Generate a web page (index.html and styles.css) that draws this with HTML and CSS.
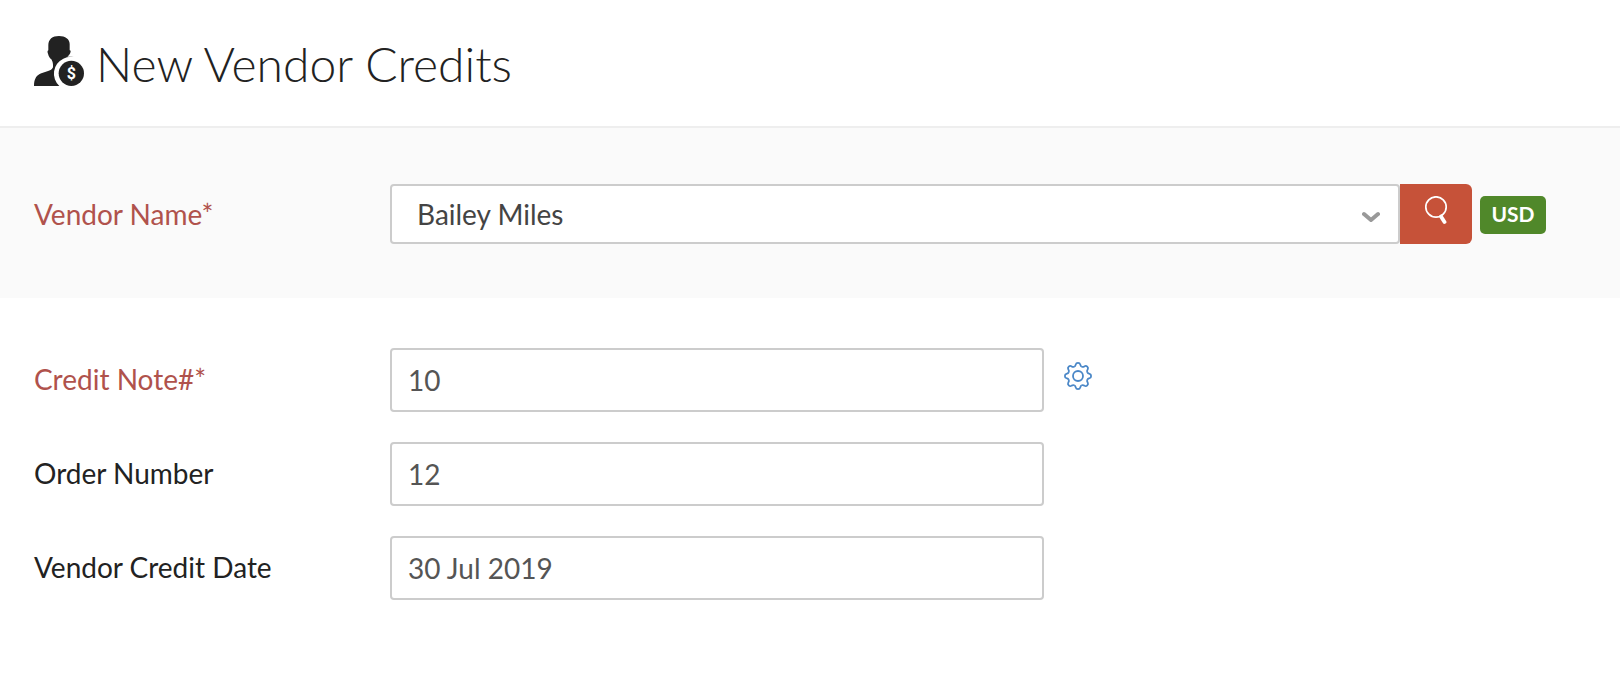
FILE: index.html
```html
<!DOCTYPE html>
<html lang="en">
<head>
<meta charset="utf-8">
<meta name="viewport" content="width=device-width, initial-scale=1">
<title>New Vendor Credits</title>
<link rel="stylesheet" href="styles.css">
</head>
<body>
<header class="page-header">
  <svg class="vendor-icon" viewBox="0 0 150 150" aria-hidden="true">
    <path fill="#222" d="M75 0C55 0 43 10 43 27L43 43C40 44 40 48 42 53C44 62 48 66 52 70C54 74 57 79 57 86L57 94C55 100 49 103 40 106L22 112C8 117 0 128 0 150L150 150L150 62L100 62C106 58 109 53 110 46C110 44 108 43 107 43L107 24C107 9 94 0 75 0Z"/>
    <path fill="#fff" d="M150 50L150 150L76 150A50 50 0 0 1 88 68C95 64 102 62 112 62Z"/>
    <circle cx="112" cy="112" r="38" fill="#222"/>
    <text class="vendor-icon-sign" x="112" y="129" text-anchor="middle">$</text>
  </svg>
  <h1 class="page-title">New Vendor Credits</h1>
</header>
<main>
  <form class="credit-form">
    <div class="form-row vendor-row">
      <label class="form-label required" for="vendor">Vendor Name*</label>
      <div class="vendor-field">
        <div class="select-box">
          <select class="vendor-select" id="vendor"><option>Bailey Miles</option></select>
          <svg class="chevron" viewBox="0 0 18 12" aria-hidden="true"><path d="M2 3L9 9L16 3" fill="none" stroke="#999" stroke-width="4" stroke-linecap="round" stroke-linejoin="round"/></svg>
        </div>
        <button class="search-button" type="button" aria-label="Search vendors">
          <svg class="search-icon" viewBox="0 0 24 28" aria-hidden="true"><circle cx="12" cy="11" r="10.2" fill="none" stroke="#fff" stroke-width="1.7"/><path d="M17 20.5L20.5 26" fill="none" stroke="#fff" stroke-width="3.8" stroke-linecap="round"/></svg>
        </button>
        <span class="currency">USD</span>
      </div>
    </div>
    <div class="details">
      <div class="form-row">
        <label class="form-label" for="note"><span class="required">Credit Note#*</span></label>
        <div class="field">
          <input class="text-input" id="note" type="text" value="10">
          <button class="settings-button" type="button" aria-label="Numbering settings">
            <svg class="gear" viewBox="-14 -14 28 28" fill="none" stroke="#4a87c7" stroke-width="1.8" aria-hidden="true">
              <defs><path id="tooth" d="M-3.83 -9.24C-2.9 -9.6 -2.5 -10.2 -2.2 -11.6C-1.9 -12.8 -1.4 -13.1 0 -13.1C1.4 -13.1 1.9 -12.8 2.2 -11.6C2.5 -10.2 2.9 -9.6 3.83 -9.24"/></defs>
              <use href="#tooth"/><use href="#tooth" transform="rotate(45)"/><use href="#tooth" transform="rotate(90)"/><use href="#tooth" transform="rotate(135)"/><use href="#tooth" transform="rotate(180)"/><use href="#tooth" transform="rotate(225)"/><use href="#tooth" transform="rotate(270)"/><use href="#tooth" transform="rotate(315)"/>
              <circle r="5"/>
            </svg>
          </button>
        </div>
      </div>
      <div class="form-row">
        <label class="form-label" for="order">Order Number</label>
        <div class="field"><input class="text-input" id="order" type="text" value="12"></div>
      </div>
      <div class="form-row">
        <label class="form-label" for="date">Vendor Credit Date</label>
        <div class="field"><input class="text-input" id="date" type="text" value="30 Jul 2019"></div>
      </div>
    </div>
  </form>
</main>
</body>
</html>
```
FILE: styles.css
```css
* { box-sizing: border-box; }

body {
  margin: 0;
  background: #fff;
  color: #222;
  font-family: Lato, "Liberation Sans", sans-serif;
  font-size: 28px;
  line-height: 32px;
}

input, select, button { font: inherit; margin: 0; }

.page-header {
  display: flex;
  align-items: flex-start;
  gap: 12px;
  padding: 36px 34px 34px;
  border-bottom: 2px solid #eee;
}

.vendor-icon { flex: none; width: 50px; height: 50px; }

.vendor-icon-sign {
  fill: #fff;
  font-family: Roboto, sans-serif;
  font-size: 48px;
  font-weight: 700;
}

.page-title {
  margin: 0;
  font-size: 48px;
  font-weight: 300;
  line-height: 56px;
}

.form-row {
  display: grid;
  grid-template-columns: 356px 1fr;
  align-items: center;
  padding: 0 74px 0 34px;
}

.vendor-row {
  padding-top: 56px;
  padding-bottom: 54px;
  background: #fafafa;
}

.required { color: #b0524c; }

.vendor-field { display: flex; align-items: center; }

.select-box { position: relative; flex: 1; }

.vendor-select {
  display: block;
  width: 100%;
  height: 60px;
  padding: 0 60px 0 25px;
  appearance: none;
  border: 2px solid #ccc;
  border-radius: 4px;
  background: #fff;
  color: #444;
}

.chevron {
  position: absolute;
  right: 20px;
  top: 27px;
  width: 18px;
  height: 12px;
  pointer-events: none;
}

.search-button {
  display: flex;
  justify-content: center;
  width: 72px;
  height: 60px;
  padding: 12px 0 0;
  border: 0;
  border-radius: 0 6px 6px 0;
  background: #c65239;
}

.search-icon { width: 24px; height: 28px; }

.currency {
  width: 66px;
  margin-top: 2px;
  margin-left: 8px;
  padding: 2px 0 4px;
  border-radius: 5px;
  background: #50882a;
  color: #fff;
  font-size: 21px;
  font-weight: 700;
  text-align: center;
}

.details {
  display: grid;
  gap: 30px;
  padding: 50px 0;
}

.details .form-label { padding-bottom: 2px; }

.field {
  display: grid;
  grid-template-columns: 19fr 14fr;
  column-gap: 20px;
}

.text-input {
  width: 100%;
  height: 64px;
  padding: 0 16px;
  border: 2px solid #ccc;
  border-radius: 4px;
  background: #fff;
  color: #555;
}

.settings-button {
  justify-self: start;
  align-self: center;
  padding: 0 0 8px;
  border: 0;
  background: none;
  line-height: 0;
}

.gear { width: 28px; height: 28px; }
```
